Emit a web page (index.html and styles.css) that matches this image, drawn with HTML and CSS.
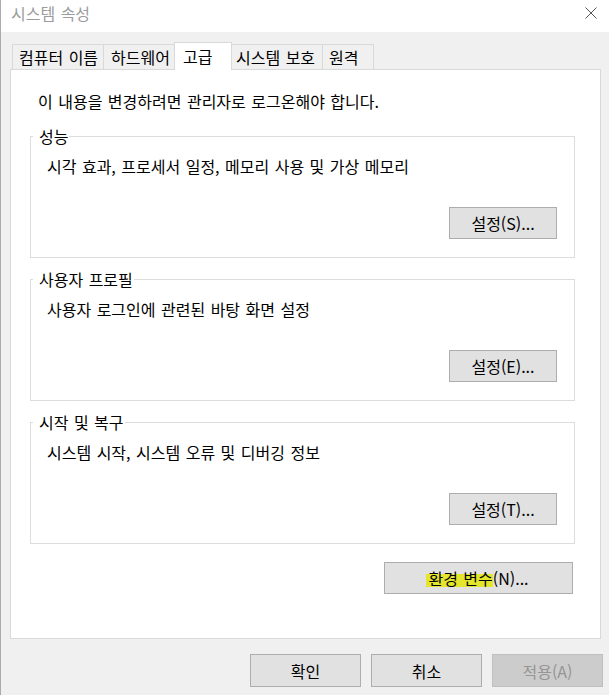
FILE: index.html
```html
<!DOCTYPE html>
<html lang="ko">
<head>
<meta charset="utf-8">
<title>시스템 속성</title>
<link rel="stylesheet" href="styles.css">
</head>
<body>
<div class="titlebar">
  <span class="title">시스템 속성</span>
  <svg class="close" width="12" height="12" viewBox="0 0 12 12" aria-hidden="true"><path d="M0.5 0.5L11.5 11.5M11.5 0.5L0.5 11.5" stroke="#555" stroke-width="1" fill="none"/></svg>
</div>
<div class="tabs">
  <div class="tab t1">컴퓨터 이름</div>
  <div class="tab t2">하드웨어</div>
  <div class="tab active">고급</div>
  <div class="tab t4">시스템 보호</div>
  <div class="tab t5">원격</div>
</div>
<div class="panel">
  <p class="notice">이 내용을 변경하려면 관리자로 로그온해야 합니다.</p>
  <div class="groups">
    <section class="group">
      <div class="group-label">성능</div>
      <p class="desc">시각 효과, 프로세서 일정, 메모리 사용 및 가상 메모리</p>
      <div class="group-actions"><button class="btn">설정(S)...</button></div>
    </section>
    <section class="group">
      <div class="group-label">사용자 프로필</div>
      <p class="desc">사용자 로그인에 관련된 바탕 화면 설정</p>
      <div class="group-actions"><button class="btn">설정(E)...</button></div>
    </section>
    <section class="group">
      <div class="group-label">시작 및 복구</div>
      <p class="desc">시스템 시작, 시스템 오류 및 디버깅 정보</p>
      <div class="group-actions"><button class="btn">설정(T)...</button></div>
    </section>
  </div>
  <div class="env-row"><button class="btn btn-env"><span class="mark">환경 변수</span>(N)...</button></div>
</div>
<div class="footer">
  <button class="btn btn-foot">확인</button>
  <button class="btn btn-foot">취소</button>
  <button class="btn btn-foot disabled">적용(A)</button>
</div>
</body>
</html>
```
FILE: styles.css
```css
html, body {
  margin: 0;
  padding: 0;
}
body {
  width: 609px;
  height: 695px;
  box-sizing: border-box;
  overflow: hidden;
  background: #f0f0f0;
  border-left: 1px solid #ababab;
  font-family: "Noto Sans CJK KR", "Noto Sans", sans-serif;
  font-size: 16px;
  word-spacing: 1px;
  color: #000;
}
.titlebar {
  height: 32px;
  box-sizing: border-box;
  background: #fff;
  display: flex;
  align-items: center;
  justify-content: space-between;
  padding: 0 12px 6px 10px;
}
.title {
  color: #9c9c9c;
  line-height: 20px;
}
.close {
  display: block;
}
.tabs {
  display: flex;
  align-items: flex-end;
  padding: 10px 0 0 11px;
}
.tab {
  box-sizing: border-box;
  height: 25px;
  line-height: 24px;
  border: 1px solid #d9d9d9;
  border-bottom: 0;
  padding-left: 6px;
  white-space: nowrap;
  margin-left: -1px;
}
.t1 { width: 92px; margin-left: 0; }
.t2 { width: 72px; padding-left: 7px; }
.t4 { width: 92px; padding-left: 4px; }
.t5 { width: 52px; }
.active {
  width: 58px;
  height: 28px;
  line-height: 26px;
  padding-left: 8px;
  margin-bottom: -1px;
  background: #fff;
  position: relative;
  z-index: 1;
}
.panel {
  margin: 0 8px 0 9px;
  background: #fff;
  border: 1px solid #d9d9d9;
  padding: 21px 25px 44px 19px;
}
.notice {
  margin: 0;
  padding-left: 8px;
  line-height: 20px;
}
.groups {
  margin-top: 25px;
  display: flex;
  flex-direction: column;
  gap: 21px;
}
.group {
  border: 1px solid #dcdcdc;
}
.group-label {
  width: fit-content;
  margin: -11px 0 0 2px;
  padding: 0 1px 0 6px;
  background: #fff;
  line-height: 20px;
}
.desc {
  margin: 10px 0 0;
  padding-left: 16px;
  line-height: 20px;
}
.group-actions {
  display: flex;
  justify-content: flex-end;
  padding: 31px 17px 18px 0;
}
.btn {
  box-sizing: border-box;
  width: 108px;
  height: 32px;
  margin: 0;
  padding: 0;
  border: 1px solid #adadad;
  border-radius: 0;
  background: #e1e1e1;
  color: #000;
  font: inherit;
  word-spacing: inherit;
  line-height: 20px;
}
.env-row {
  display: flex;
  justify-content: flex-end;
  margin-top: 18px;
  padding-right: 2px;
}
.btn-env {
  width: 189px;
}
.mark {
  margin-left: -2px;
  padding-left: 2px;
  background: linear-gradient(to bottom, transparent 0, transparent 32%, #e3e62c 32%, #e3e62c 86%, transparent 86%);
}
.footer {
  display: flex;
  justify-content: flex-end;
  gap: 10px;
  padding: 15px 6px 0 0;
}
.btn-foot {
  width: 111px;
  height: 33px;
}
.disabled {
  background: #cccccc;
  border-color: #bfbfbf;
  color: #959595;
}
```
